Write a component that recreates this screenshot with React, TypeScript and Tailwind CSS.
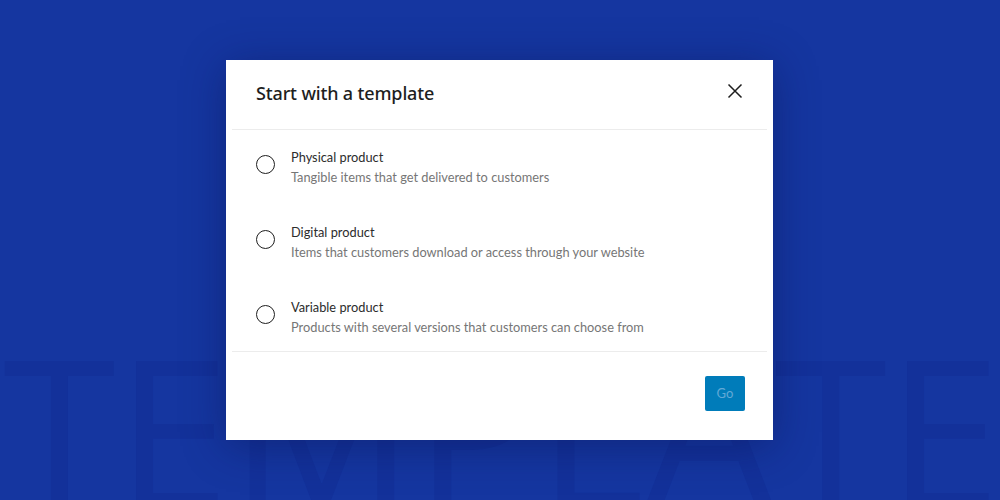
import React from "react";

const options = [
  { title: "Physical product", desc: "Tangible items that get delivered to customers" },
  { title: "Digital product", desc: "Items that customers download or access through your website" },
  { title: "Variable product", desc: "Products with several versions that customers can choose from" },
];

export default function App() {
  return (
    <div
      className="relative w-[1000px] h-[500px] overflow-hidden bg-[#1536a0] flex pl-[226px] pt-[60px]"
      style={{ fontFamily: '"Noto Sans", "Open Sans", sans-serif' }}
    >
      <div
        className="absolute left-[3px] top-[326px] text-[205px] leading-none tracking-[0px] text-[#13319a] whitespace-nowrap select-none"
        style={{ fontFamily: '"Open Sans", sans-serif' }}
        aria-hidden="true"
      >
        TEMPLATE
      </div>

      <div className="relative w-[547px] h-[380px] bg-white flex flex-col shadow-[0_6px_40px_rgba(8,20,80,0.45)]">
        <div className="h-[69px] flex items-start justify-between pl-[30px] pr-[30px]">
          <h1 className="mt-[21px] text-[18px] tracking-[-0.15px] text-[#1e1e1e] font-medium leading-[24px]">
            Start with a template
          </h1>
          <button className="mt-[23px] w-[16px] h-[16px] flex items-center justify-center text-[#1e1e1e]" aria-label="Close">
            <svg width="16" height="16" viewBox="0 0 16 16" fill="none">
              <path d="M1.5 1.5L14.5 14.5M14.5 1.5L1.5 14.5" stroke="currentColor" strokeWidth="1.5" />
            </svg>
          </button>
        </div>
        <div className="h-px bg-[#ececec] mx-[6px]" />

        <div
          className="flex flex-col gap-[35px] pt-[17px] pb-[14px] pl-[30px]"
          style={{ fontFamily: 'Lato, "Noto Sans", sans-serif' }}
        >
          {options.map((o) => (
            <div key={o.title} className="flex items-start h-[40px]">
              <span className="mt-[8px] w-[19px] h-[19px] rounded-full border border-[#1e1e1e] shrink-0" />
              <div className="ml-[16px] flex flex-col text-[12.8px] leading-[20px]">
                <span className="text-[#2c2c2c]">{o.title}</span>
                <span className="text-[#767676]">{o.desc}</span>
              </div>
            </div>
          ))}
        </div>
        <div className="h-px bg-[#ececec] mx-[6px]" />

        <div className="flex-1 flex justify-end items-start pt-[24px] pr-[28px]">
          <button
            className="w-[40px] h-[35px] rounded-[2px] bg-[#007cba] text-[#62a9d6] text-[13px] leading-none"
            style={{ fontFamily: 'Lato, "Noto Sans", sans-serif' }}
          >
            Go
          </button>
        </div>
      </div>
    </div>
  );
}
